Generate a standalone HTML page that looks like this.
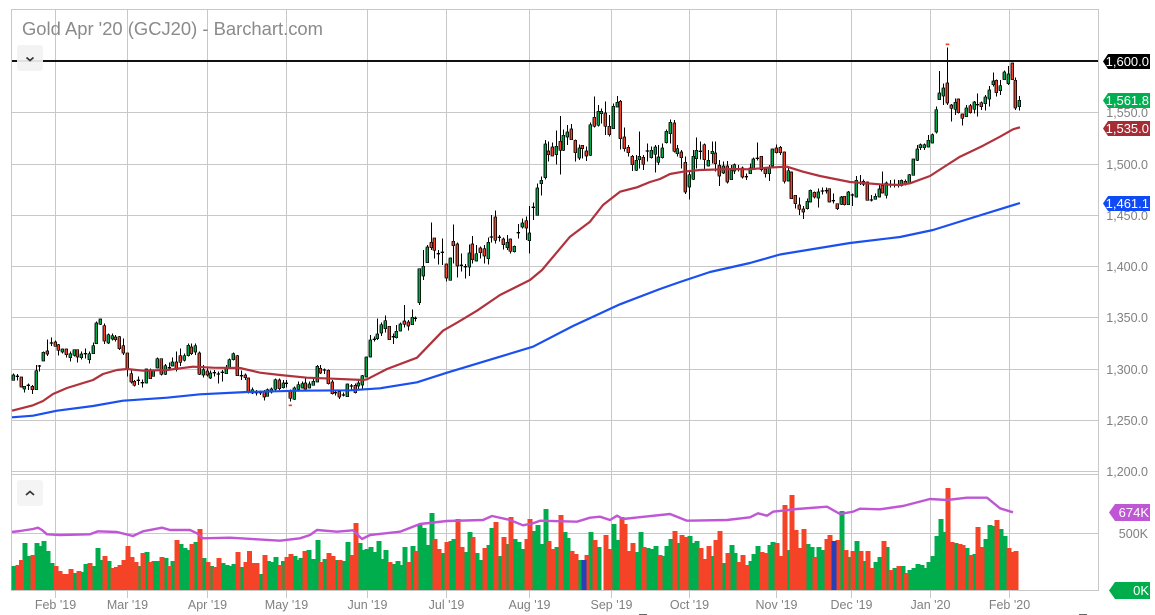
<!DOCTYPE html>
<html>
<head>
<meta charset="utf-8">
<style>
html,body{margin:0;padding:0;background:#fff;width:1155px;height:615px;overflow:hidden}
svg{display:block}
text{font-family:"Liberation Sans",sans-serif}
.ax{font-size:12.5px;fill:#808080}
.tg{font-size:13px;fill:#fff;text-anchor:end}
.b path{fill:none;stroke-width:15;shape-rendering:crispEdges}
.w{fill:none;stroke:#000;stroke-width:3;shape-rendering:crispEdges}
</style>
</head>
<body>
<svg width="1155" height="615" viewBox="0 0 1155 615" xmlns="http://www.w3.org/2000/svg">
<rect width="1155" height="615" fill="#fff"/>
<g stroke="#c8c8c8" stroke-width="1" fill="none" shape-rendering="crispEdges">
<path d="M11.5 9.5H1098.5V590.5H11.5Z"/>
<path d="M12 112.5H1098M12 164.5H1098M12 215.5H1098M12 266.5H1098M12 317.5H1098M12 369.5H1098M12 420.5H1098M12 471.5H1098M12 474.5H1098M12 533.5H1098"/>
<path d="M55.5 9V598M127.5 9V598M207.5 9V598M286.5 9V598M367.5 9V598M446.5 9V598M529.5 9V598M611.5 9V598M689.5 9V598M776.5 9V598M851.5 9V598M930.5 9V598M1009.5 9V598"/>
</g>
<text x="22" y="35" font-size="18.5" fill="#8a8a8a" textLength="301" lengthAdjust="spacingAndGlyphs">Gold Apr '20 (GCJ20) - Barchart.com</text>

<!-- volume -->
<g class="b" transform="translate(0,470) scale(.33333)">
<path stroke="#00ad4c" d="M42 288V360M75 219V360M87 258V360M111 219V360M122 228V360M132 213V360M144 243V360M156 279V360M225 309V360M248 306V360M258 282V360M282 288V360M294 234V360M305 270V360M327 273V360M419 288V360M441 246V360M462 273V360M474 273V360M498 264V360M519 273V360M543 222V360M555 234V360M566 240V360M588 216V360M612 264V360M635 288V360M669 279V360M681 285V360M692 288V360M702 282V360M726 291V360M783 312V360M806 273V360M816 276V360M828 261V360M851 273V360M885 258V360M896 270V360"/>
<path stroke="#f44326" d="M54 285V360M65 270V360M99 255V360M168 288V360M180 303V360M191 312V360M202 312V360M213 297V360M237 303V360M270 279V360M315 258V360M339 294V360M350 291V360M360 285V360M372 270V360M384 228V360M396 261V360M408 276V360M429 249V360M452 276V360M486 261V360M509 288V360M531 210V360M576 222V360M600 177V360M624 276V360M645 291V360M657 264V360M714 246V360M738 276V360M749 243V360M759 279V360M771 279V360M795 255V360M840 285V360M861 261V360M873 252V360"/>
</g>
<g class="b" transform="translate(300,470) scale(.33333)">
<path stroke="#00ad4c" d="M3 264V360M27 240V360M42 267V360M54 210V360M75 267V360M111 270V360M132 273V360M144 216V360M180 219V360M192 240V360M201 237V360M213 231V360M225 246V360M237 213V360M246 267V360M258 240V360M282 282V360M294 273V360M303 285V360M315 231V360M339 228V360M360 165V360M372 174V360M384 225V360M396 129V360M429 249V360M453 213V360M462 207V360M498 246V360M510 186V360M531 249V360M543 270V360M567 225V360M576 174V360M600 258V360M621 222V360M645 207V360M657 216V360M669 237V360M702 183V360M714 165V360M726 222V360M738 117V360M771 231V360M795 186V360M804 204V360M840 270V360M873 186V360M897 231V360"/>
<path stroke="#f44326" d="M15 243V360M63 276V360M87 249V360M99 258V360M120 270V360M156 255V360M168 159V360M270 276V360M327 276V360M348 243V360M405 207V360M417 237V360M441 216V360M474 147V360M486 231V360M519 201V360M555 234V360M588 156V360M612 201V360M633 141V360M681 207V360M690 147V360M747 213V360M759 237V360M783 135V360M816 243V360M828 252V360M861 255V360M885 210V360"/>
<path stroke="#2540b8" d="M852 270V360"/>
</g>
<g class="b" transform="translate(600,470) scale(.33333)">
<path stroke="#00ad4c" d="M42 162V360M54 210V360M111 246V360M123 186V360M144 234V360M156 237V360M168 228V360M189 258V360M201 228V360M213 207V360M237 219V360M270 198V360M282 219V360M291 213V360M339 258V360M372 279V360M396 225V360M405 249V360M453 273V360M462 252V360M474 228V360M510 225V360M519 216V360M564 240V360M624 222V360M636 231V360M657 231V360M669 240V360M726 123V360M747 261V360M771 213V360M792 273V360M828 276V360M840 261V360"/>
<path stroke="#f44326" d="M18 195V360M30 237V360M66 141V360M75 162V360M87 243V360M99 219V360M132 231V360M180 255V360M225 183V360M246 195V360M258 201V360M303 234V360M315 267V360M327 228V360M348 210V360M360 183V360M384 249V360M417 276V360M429 255V360M441 285V360M486 246V360M498 249V360M531 219V360M543 258V360M555 105V360M576 75V360M588 180V360M600 234V360M612 177V360M645 261V360M681 207V360M690 195V360M714 210V360M738 240V360M759 243V360M783 243V360M804 243V360M816 294V360"/>
<path stroke="#2540b8" d="M702 213V360"/>
</g>
<g class="b" transform="translate(880,470) scale(.33333)">
<path stroke="#00ad4c" d="M21 231V360M45 294V360M69 288V360M90 300V360M102 294V360M114 282V360M126 285V360M135 294V360M147 276V360M159 258V360M171 198V360M183 147V360M192 186V360M228 219V360M261 234V360M285 252V360M318 207V360M330 165V360M339 168V360M363 177V360M375 198V360"/>
<path stroke="#f44326" d="M12 213V360M33 300V360M57 288V360M78 309V360M204 54V360M216 216V360M240 222V360M249 225V360M273 255V360M294 171V360M306 231V360M351 150V360M387 234V360M396 246V360M408 243V360"/>
</g>

<!-- candles -->
<defs>
<path id="ag" d="M40 226V240M73 260V266M109 213V268M130 158V182M187 148V155M211 162V172M223 150V165M244 163V172M268 162V178M280 138V160M289 70V130M301 58V72M325 105V128M337 108V116M439 208V248M460 212V228M472 177V203M496 198V222M517 187V197M553 168V180M565 137V166M586 138V155M610 210V224M631 220V233M679 203V220M688 180V205M700 162V178M757 270V278M802 270V288M814 268V276M826 240V267M850 250V262M883 265V297M895 255V267M907 252V263M928 253V263M940 245V255M952 200V245M1042 253V289M1075 250V257M1087 228V254M1099 172V230M1111 121V170M1132 103V115"/>
<path id="ar" d="M64 232V260M97 260V268M142 154V161M166 127V138M175 135V150M199 148V163M232 150V170M313 78V122M346 112V118M358 111V145M370 138V158M382 160V207M394 222V245M403 245V255M451 210V235M484 177V222M529 187V208M541 168V186M574 142V160M598 160V222M622 214V224M712 168V226M736 226V232M745 235V275M793 277V290M838 241V265M871 272V294M916 250V266M961 206V218M985 212V250M997 247V280M1018 276V290M1066 257V277"/>
<path id="bg" d="M109 725V742M121 703V722M157 683V703M178 537V637M190 530V557M202 472V517M271 505V570M328 490V530M349 492V512M385 458V505M442 458V472M463 470V484M487 400V410M508 430V451M532 295V375M544 272V280M556 163V262M589 170V193M610 137V180M622 127V140M658 175V203M691 105V195M715 65V105M724 65V70M760 50V115M772 38V50M829 212V240M838 200V208M874 182V202M886 172V192M895 202V216M64 705V728M76 693V715"/>
<path id="br" d="M88 710V748M133 694V702M145 697V707M214 458V472M223 445V480M259 523V563M280 455V466M292 463V527M337 463V508M361 475V487M373 477V497M406 382V450M430 448V463M451 448V483M499 393V413M565 184V193M577 172V197M601 155V180M634 118V148M646 152V187M667 167V175M679 184V197M703 83V108M736 70V108M748 110V133M781 35V145M793 142V175M805 173V187M817 200V223M850 203V222"/>
<path id="cg" d="M37 145V172M49 95V127M61 68V100M82 147V160M118 225V260M130 170V237M139 152V175M175 182V197M187 155V160M220 199V218M244 212V238M253 195V212M301 205V220M310 178V208M358 203V220M367 148V197M415 213V242M472 305V325M481 272V305M505 277V293M574 292V312M595 277V313M619 242V290M640 245V252M676 290V297M688 268V290M709 250V285M754 242V256M778 225V248M790 178V225M802 148V180M811 135V142M823 135V142M835 122V140M847 105V128M859 30V95"/>
<path id="cr" d="M73 70V153M94 157V172M106 188V275M163 135V178M196 160V190M208 197V227M232 199V245M277 205V230M334 170V208M346 208V220M379 145V157M391 143V157M403 157V243M424 217V295M436 287V310M448 316V327M460 328V335M493 278V290M538 267V305M562 312V325M583 290V313M652 247V300M697 258V278M766 245V252"/>
<path id="dg" d="M118 190V208M130 175V197M166 218V237M199 235V259M223 217V237M256 202V220M268 181V206M280 154V163M301 168V181M313 127V148M325 133V160M358 212V229"/>
<path id="dr" d="M142 160V218M154 226V234M175 208V247M187 253V264M211 228V247M244 219V229M289 152V187M337 100V148M346 152V233"/>
</defs>
<g transform="translate(0,300) scale(.33333)">
<path class="w" d="M40 220V242M52 222V242M64 232V262M73 258V278M85 250V270M97 255V282M109 195V268M118 195V215M130 155V182M142 118V168M154 112V138M166 122V140M175 132V167M187 145V160M199 145V172M211 155V185M223 148V170M232 148V187M244 155V178M256 145V175M268 155V190M280 128V162M289 65V130M301 55V75M313 70V132M325 100V132M337 100V122M346 105V125M358 108V150M370 115V165M382 160V230M394 210V250M403 240V260M415 230V255M427 238V263M439 205V250M451 205V237M460 208V230M472 172V205M484 175V227M496 192V225M508 188V210M517 172V200M529 155V215M541 145V198M553 160V185M565 130V170M574 130V165M586 130V165M598 155V225M610 195V232M622 205V230M631 212V237M643 210V230M655 215V250M667 210V245M679 195V222M688 175V207M700 158V182M712 165V228M724 212V240M736 220V240M745 232V280M757 262V282M769 270V287M781 272V285M793 270V302M802 265V290M814 262V280M826 235V272M838 235V270M850 240V265M859 240V262M871 268V305M883 260V300M895 245V270M907 245V266M916 230V268M928 245V265M940 235V257M952 195V246M961 195V222M973 205V222M985 208V253M997 240V283M1006 270V287M1018 270V297M1030 278V290M1042 250V290M1054 252V268M1066 250V280M1075 240V270M1087 225V270M1099 170V232M1111 105V172M1123 110V125M1132 55V120"/>
<path fill="none" stroke="#000" stroke-width="10" d="M52 227v4M85 254v4M118 196v4M154 127v4M256 159v4M415 239v4M427 246v4M508 201v4M643 216v4M655 220v4M667 215v4M724 225v4M769 276v4M781 276v4M859 248v4M973 208v4M1006 276v4M1030 283v4M1054 256v4M1123 116v4"/>
<g fill="none" stroke="#000" stroke-width="10">
<use href="#ag" y="-2"/><use href="#ag" y="2"/><use href="#ar" y="-2"/><use href="#ar" y="2"/>
</g>
<use href="#ag" fill="none" stroke="#00ad4c" stroke-width="5"/>
<use href="#ar" fill="none" stroke="#f44326" stroke-width="5"/>
<path fill="none" stroke="#f44326" stroke-width="5" d="M866 316H876"/>
</g>
<g transform="translate(360,90) scale(.33333)">
<path class="w" d="M64 698V738M76 677V728M88 708V750M100 730V762M109 705V745M121 698V725M133 645V712M145 690V722M157 658V705M166 680V695M178 535V645M190 480V570M202 465V518M214 397V480M223 445V505M235 480V523M247 445V525M259 520V575M271 503V572M280 403V520M292 458V562M304 490V545M316 522V565M328 463V558M337 438V520M349 465V515M361 470V505M373 465V520M385 443V523M394 375V458M406 362V460M418 435V455M430 443V478M442 435V480M451 445V490M463 467V488M475 402V445M487 385V415M499 380V450M508 348V490M520 338V390M532 280V377M544 260V317M556 150V268M565 155V215M577 158V198M589 122V223M601 78V253M610 118V183M622 105V165M634 102V150M646 148V215M658 163V210M667 165V205M679 170V213M691 98V198M703 20V112M715 45V110M724 55V100M736 35V135M748 75V140M760 40V117M772 18V50M781 30V178M793 112V185M805 165V200M817 195V243M829 195V243M838 125V235M850 195V240M862 160V215M874 170V205M886 165V248M895 165V225"/>
<path fill="none" stroke="#000" stroke-width="10" d="M100 738v4M166 683v4M235 489v4M247 485v4M304 524v4M316 528v4M394 439v4M418 440v4M475 426v4M520 350v4M862 181v4"/>
<g fill="none" stroke="#000" stroke-width="10">
<use href="#bg" y="-2"/><use href="#bg" y="2"/><use href="#br" y="-2"/><use href="#br" y="2"/>
</g>
<use href="#bg" fill="none" stroke="#00ad4c" stroke-width="5"/>
<use href="#br" fill="none" stroke="#f44326" stroke-width="5"/>
</g>
<g transform="translate(650,100) scale(.33333)">
<path class="w" d="M37 130V175M49 88V130M61 58V130M73 60V157M82 135V170M94 150V205M106 170V282M118 215V298M130 150V240M139 112V205M151 125V178M163 130V210M175 150V200M187 125V190M196 125V215M208 180V258M220 185V222M232 183V250M244 195V240M253 190V222M265 195V215M277 200V235M289 220V240M301 190V222M310 172V210M322 128V182M334 168V215M346 203V232M358 195V243M367 145V200M379 133V160M391 138V165M403 155V250M415 200V245M424 215V297M436 285V325M448 293V345M460 318V357M472 295V328M481 268V308M493 275V295M505 265V322M517 262V283M529 262V280M538 265V307M550 280V310M562 310V330M574 288V315M583 288V317M595 273V315M607 280V318M619 228V292M631 225V255M640 238V258M652 245V302M664 285V305M676 280V298M688 255V292M697 215V280M709 245V296M721 240V262M733 238V262M745 240V262M754 238V260M766 238V256M778 222V252M790 178V226M802 135V183M811 130V150M823 130V150M835 105V142M847 100V130M859 20V100"/>
<path fill="none" stroke="#000" stroke-width="10" d="M151 152v4M265 206v4M289 228v4M322 173v4M517 271v4M529 270v4M550 300v4M607 283v4M631 246v4M664 298v4M721 252v4M733 252v4M745 252v4"/>
<g fill="none" stroke="#000" stroke-width="10">
<use href="#cg" y="-2"/><use href="#cg" y="2"/><use href="#cr" y="-2"/><use href="#cr" y="2"/>
</g>
<use href="#cg" fill="none" stroke="#00ad4c" stroke-width="5"/>
<use href="#cr" fill="none" stroke="#f44326" stroke-width="5"/>
</g>
<g transform="translate(900,30) scale(.33333)">
<path class="w" d="M118 123V210M130 160V225M142 52V225M154 222V275M166 205V255M175 205V250M187 250V287M199 225V260M211 222V250M223 213V250M232 190V260M244 215V240M256 195V242M268 168V230M280 128V170M289 148V200M301 150V195M313 122V150M325 108V165M337 98V150M346 142V240M358 198V242"/>
<path fill="none" stroke="#000" stroke-width="10" d="M232 222v4"/>
<g fill="none" stroke="#000" stroke-width="10">
<use href="#dg" y="-2"/><use href="#dg" y="2"/><use href="#dr" y="-2"/><use href="#dr" y="2"/>
</g>
<use href="#dg" fill="none" stroke="#00ad4c" stroke-width="5"/>
<use href="#dr" fill="none" stroke="#f44326" stroke-width="5"/>
<path fill="none" stroke="#f44326" stroke-width="5" d="M137 43H148"/>
</g>

<!-- moving averages -->
<polyline fill="none" stroke="#b0323c" stroke-width="2.2" stroke-linejoin="round" points="12,410.7 33,405.3 43,401 53,394 67,388 93,380 103,374 117,370 127,369 143,370.7 167,370 193,366.7 213,367.7 240,368 260,372.7 280,375 307,377.7 333,378.7 363,380 367,379.3 387,369 417,357.7 443,330.7 457,322.7 477,310.7 500,295 530,280 542,270 570,236.7 590,221.7 603,205 620,191.7 637,187.3 650,182 660,179 670,174 683,171.7 700,170 733,169 750,169.3 767,167.7 787,166.7 803,171.7 820,176 850,182 880,184.3 900,185 910,183.3 930,176 947,165 960,156.7 983,145.7 1000,136.7 1013,129.3 1020,127.3"/>
<polyline fill="none" stroke="#1a4ff0" stroke-width="2.2" stroke-linejoin="round" points="12,417.3 33,415.7 57,410.7 93,406 123,400.7 167,397.7 200,394.3 247,392 300,390.7 350,390.3 380,388.3 417,382.3 447,372.7 500,356.7 533,346.7 573,326 620,304.3 660,289 680,282 710,272 750,263 780,254.5 850,243 900,237 933,230 965,220 1020,203"/>
<polyline fill="none" stroke="#bf57d5" stroke-width="2.4" stroke-linejoin="round" points="12,532 20,531 33,529 38,527.7 42,530 47,534.3 60,535 90,534.3 98,531.3 117,532 133,536 143,531.3 162,527.7 170,530 190,530 197,533.3 203,538.3 230,537.7 257,539.3 280,540.7 300,538.3 310,535 317,530 337,531.7 353,530.3 362,539 370,535 400,531.7 420,524 447,521 483,520 492,516 510,520 523,525.3 533,523.3 540,520.7 577,521.7 590,517.7 600,516.7 610,520 617,515.7 623,519 670,514 687,520.7 727,520 750,517.3 758,513.3 767,515.7 773,511.7 797,509 827,506.7 840,514 853,511.7 860,508.7 880,509.3 903,506 930,499 947,500 967,497.7 987,497.7 1000,508.3 1013,512.3"/>

<!-- price line -->
<path d="M12 61H1098" stroke="#111" stroke-width="2" fill="none" shape-rendering="crispEdges"/>

<!-- collapse buttons -->
<rect x="17" y="45" width="26" height="26" rx="3" fill="#f2f2f2" fill-opacity=".92"/>
<path d="M26.5 57.5L30 60.5L33.5 57.5" fill="none" stroke="#333" stroke-width="1.7"/>
<rect x="17" y="480" width="26" height="26" rx="3" fill="#f4f4f4"/>
<path d="M26 495L30 491.5L34 495" fill="none" stroke="#333" stroke-width="1.7"/>

<!-- axis labels -->
<g class="ax" text-anchor="end">
<text x="1148" y="117">1,550.0</text>
<text x="1148" y="169">1,500.0</text>
<text x="1148" y="220">1,450.0</text>
<text x="1148" y="271">1,400.0</text>
<text x="1148" y="322">1,350.0</text>
<text x="1148" y="374">1,300.0</text>
<text x="1148" y="425">1,250.0</text>
<text x="1148" y="476">1,200.0</text>
<text x="1148" y="538">500K</text>
</g>
<g class="ax" text-anchor="middle">
<text x="55.5" y="609">Feb '19</text>
<text x="127.5" y="609">Mar '19</text>
<text x="207.5" y="609">Apr '19</text>
<text x="286.5" y="609">May '19</text>
<text x="367.5" y="609">Jun '19</text>
<text x="446.5" y="609">Jul '19</text>
<text x="529.5" y="609">Aug '19</text>
<text x="611.5" y="609">Sep '19</text>
<text x="689.5" y="609">Oct '19</text>
<text x="776.5" y="609">Nov '19</text>
<text x="851.5" y="609">Dec '19</text>
<text x="930.5" y="609">Jan '20</text>
<text x="1009.5" y="609">Feb '20</text>
</g>
<path d="M639 614.5H647M1079 614.5H1087" stroke="#666" stroke-width="1" fill="none"/>

<!-- tags -->
<path d="M1108 54H1150V69H1108L1103 61.5Z" fill="#000"/>
<text class="tg" x="1149" y="66">1,600.0</text>
<path d="M1108 93H1150V108H1108L1103 100.5Z" fill="#00b050"/>
<text class="tg" x="1149" y="105">1,561.8</text>
<path d="M1108 121H1150V136H1108L1103 128.5Z" fill="#a62b33"/>
<text class="tg" x="1149" y="133">1,535.0</text>
<path d="M1108 196H1150V211H1108L1103 203.5Z" fill="#0f4af5"/>
<text class="tg" x="1149" y="208">1,461.1</text>
<path d="M1115 504H1150V521H1115L1109 512.5Z" fill="#bf57d5"/>
<text class="tg" x="1149" y="517">674K</text>
<path d="M1115 582H1150V599H1115L1109 590.5Z" fill="#00ad4c"/>
<text class="tg" x="1149" y="595">0K</text>
</svg>
</body>
</html>
